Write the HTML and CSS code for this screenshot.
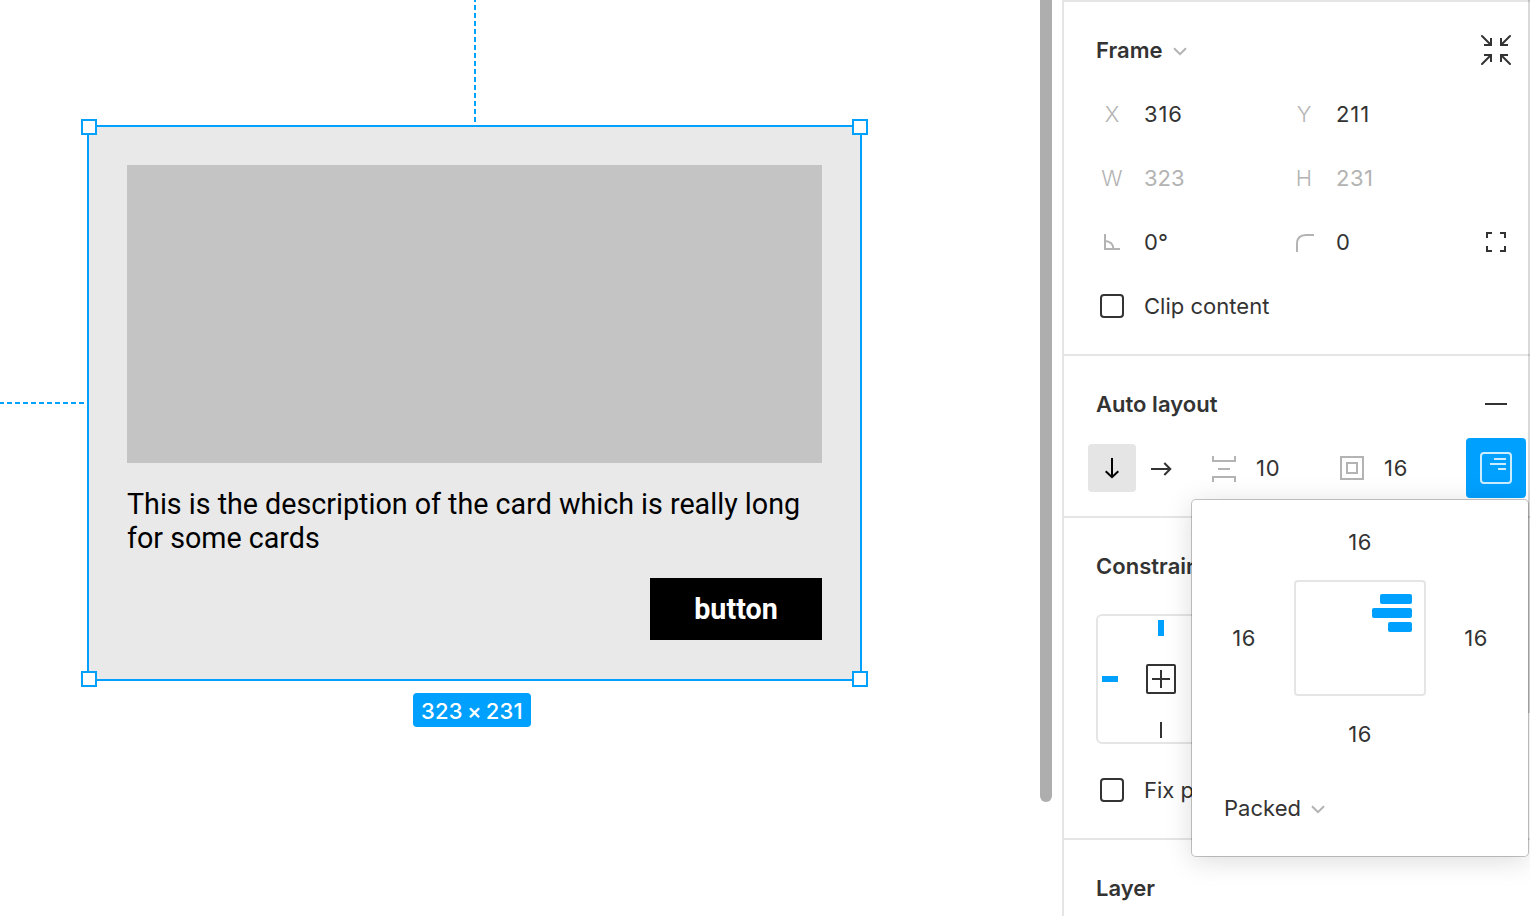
FILE: index.html
```html
<!DOCTYPE html>
<html lang="en">
<head>
<meta charset="utf-8">
<title>Auto layout</title>
<link rel="stylesheet" href="styles.css">
</head>
<body>
<div class="app">
  <main class="canvas">
    <div class="guide guide-v"></div>
    <div class="guide guide-h"></div>
    <div class="frame">
      <div class="picture"></div>
      <p class="desc">This is the description of the card which is really long<br>for some cards</p>
      <div class="btn">button</div>
      <i class="handle tl"></i><i class="handle tr"></i><i class="handle bl"></i><i class="handle br"></i>
    </div>
    <div class="size">323 × 231</div>
    <div class="scroll"></div>
  </main>
  <aside class="panel">
    <section class="section">
      <div class="row head">
        <h2>Frame</h2>
        <svg class="chev" width="14" height="9" viewBox="0 0 14 9"><path d="M1 1.2l6 6 6-6"/></svg>
        <svg class="end ico" width="48" height="48" viewBox="0 0 48 48"><path stroke-linecap="round" d="M10 10l8.500 8.500M38 10l-8.500 8.500M10 38l8.500-8.500M38 38l-8.500-8.500"/><path d="M19 12v7h-7M29 12v7h7M19 36v-7h-7M29 36v-7h7"/></svg>
      </div>
      <div class="row props"><span class="key">X</span><span class="val num">316</span><span class="key">Y</span><span class="val num">211</span></div>
      <div class="row props off"><span class="key">W</span><span class="val">323</span><span class="key">H</span><span class="val num-s">231</span></div>
      <div class="row props">
        <svg class="ico soft" width="48" height="48" viewBox="0 0 48 48"><path d="M17 16v15h15M17 23c5 0 8.500 3.500 8.500 8"/></svg>
        <span class="val">0°</span>
        <svg class="ico soft" width="48" height="48" viewBox="0 0 48 48"><path d="M17 34v-8c0-6 3-9 9-9h8"/></svg>
        <span class="val">0</span>
        <svg class="ico" width="48" height="48" viewBox="0 0 48 48"><path d="M15 20v-5h5M28 15h5v5M33 28v5h-5M20 33h-5v-5"/></svg>
      </div>
      <div class="row props check"><i class="box"></i><span class="val">Clip content</span></div>
    </section>
    <section class="section">
      <div class="row head"><h2>Auto layout</h2><svg class="end ico" width="48" height="48" viewBox="0 0 48 48"><path d="M13 24h22"/></svg></div>
      <div class="row auto">
        <span class="dir"><svg class="ico dark" width="48" height="48" viewBox="0 0 48 48"><path d="M24 14v19M17.700 27.200l6.300 6 6.300-6"/></svg></span>
        <svg class="ico" width="50" height="48" viewBox="0 0 50 48"><path d="M15 25h19M28.300 19l6 6-6 6"/></svg>
        <svg class="ico soft" width="48" height="48" viewBox="0 0 48 48"><path d="M13 12v5h22v-5M13 38v-5h22v5M18 25h12"/></svg>
        <span class="val num">10</span>
        <svg class="ico soft" width="48" height="48" viewBox="0 0 48 48"><path d="M13 13h22v22H13zM19 19h10v10H19z"/></svg>
        <span class="val num">16</span>
        <span class="align"><svg class="ico light" width="60" height="60" viewBox="0 0 60 60"><rect x="15" y="15" width="30" height="30" rx="3"/><path d="M28 21h12M24 26h16M32 31h8"/></svg></span>
      </div>
    </section>
    <section class="section">
      <div class="row head"><h2 class="covered-title">Constraints</h2></div>
      <div class="constraint">
        <svg class="ico" width="126" height="126" viewBox="0 0 126 126"><path class="blue" d="M63 4v16M4 63h16"/><rect x="49" y="49" width="28" height="28" rx="1"/><path d="M63 54v18M54 63h18M63 106v16M106 63h16"/></svg>
      </div>
      <div class="row props check"><i class="box"></i><span class="val covered">Fix position</span></div>
    </section>
    <section class="section">
      <div class="row head"><h2>Layer</h2></div>
    </section>
    <div class="edge"></div>
    <div class="popover">
      <div class="pads">
        <span class="top">16</span>
        <span class="left">16</span>
        <div class="stack"><i class="bar b1"></i><i class="bar b2"></i><i class="bar b3"></i></div>
        <span class="right">16</span>
        <span class="bottom">16</span>
      </div>
      <div class="mode">Packed<svg class="chev" width="14" height="9" viewBox="0 0 14 9"><path d="M1 1.200l6 6 6-6"/></svg></div>
    </div>
  </aside>
</div>
</body>
</html>
```
FILE: styles.css
```css
* { box-sizing: border-box; }
body {
  margin: 0;
  overflow: hidden;
  background: #fff;
  color: #333;
  font: 22px/32px Inter, "Liberation Sans", sans-serif;
  letter-spacing: 0.02px;
}
svg { display: block; flex: none; }
.app {
  display: flex;
  width: 1530px;
  height: 916px;
  overflow: hidden;
}

/* Canvas */
.canvas { position: relative; flex: 1; }
.guide { position: absolute; }
.guide-v {
  left: 474px; top: 0; width: 2px; height: 122px;
  background: repeating-linear-gradient(to bottom, #00a0ff 0 5px, transparent 5px 8px) 0 -3px / 2px 128px;
}
.guide-h {
  left: 0; top: 402px; width: 84px; height: 2px;
  background: repeating-linear-gradient(to right, #00a0ff 0 5px, transparent 5px 8px) -1px 0 / 88px 2px;
}
.frame {
  position: absolute;
  left: 87px; top: 125px;
  width: 775px; height: 556px;
  padding: 38px;
  border: 2px solid #00a0ff;
  background: #e9e9e9;
  display: flex;
  flex-direction: column;
}
.picture { height: 298.400px; background: #c4c4c4; }
.desc {
  margin: 24px 0 23px;
  color: #000;
  font: 28.700px/34px Roboto, sans-serif;
  letter-spacing: -0.010px;
  white-space: nowrap;
}
.btn {
  align-self: flex-end;
  width: 172px; height: 62px;
  background: #000;
  color: #fff;
  font: bold 28.700px/62px Roboto, sans-serif;
  letter-spacing: 0;
  text-align: center;
}
.handle {
  position: absolute;
  width: 16px; height: 16px;
  border: 2px solid #00a0ff;
  background: #fff;
}
.tl { left: -8px; top: -8px; }
.tr { right: -8px; top: -8px; }
.bl { left: -8px; bottom: -8px; }
.br { right: -8px; bottom: -8px; }
.size {
  position: absolute;
  left: 413px; top: 693px;
  width: 118px; height: 34px;
  border-radius: 4px;
  background: #00a0ff;
  color: #fff;
  font-weight: 500;
  line-height: 36px;
  letter-spacing: 0.200px;
  word-spacing: -2px;
  text-align: center;
  white-space: nowrap;
}
.scroll {
  position: absolute;
  left: 1040px; top: -10px;
  width: 12px; height: 812px;
  border-radius: 6px;
  background: #aeaeae;
}

/* Properties panel */
.panel {
  position: relative;
  flex: none;
  width: 468px;
  border-left: 2px solid #e5e5e5;
  background: #fff;
}
.section { padding: 16px 0 16px 24px; border-top: 2px solid #e5e5e5; }
.row { height: 64px; display: flex; align-items: center; }
.head { padding-left: 8px; padding-right: 10px; }
h2 { margin: 0; font-size: 22px; font-weight: 600; letter-spacing: 0.030px; }
.end { margin-left: auto; }
.chev { fill: none; stroke: #b3b3b3; stroke-width: 2; margin: 2px 0 0 10.500px; }
.ico { fill: none; stroke: #333; stroke-width: 2; }
.soft { stroke: #b3b3b3; }
.dark { stroke: #000; }
.light { stroke: #fff; stroke-opacity: 0.8; }
.props { display: grid; grid-template-columns: 48px 144px 48px 144px 48px; }
.key { color: #b3b3b3; font-weight: 350; text-align: center; }
.val { padding-left: 8px; white-space: nowrap; }
.num { letter-spacing: 0.900px; }
.num-s { letter-spacing: 0.500px; }
.off .val { color: #b3b3b3; }
.covered { width: 56px; overflow: hidden; }
.covered-title { width: 96px; overflow: hidden; }
.box {
  width: 24px; height: 24px;
  margin-left: 12px;
  border: 2px solid #333;
  border-radius: 4px;
}
.auto { display: grid; grid-template-columns: 48px 64px 48px 80px 48px 90px 60px; }
.dir { border-radius: 4px; background: #e5e5e5; }
.align { border-radius: 4px; background: #00a0ff; }
.constraint {
  width: 130px; height: 130px;
  margin: 16px 0 14px 8px;
  border: 2px solid #e5e5e5;
  border-radius: 6px;
}
.blue { stroke: #00a0ff; stroke-width: 6; }
.edge {
  position: absolute;
  right: 0; top: 0;
  width: 2px; height: 713px;
  background: rgba(0, 0, 0, 0.150);
}

/* Alignment and padding popover */
.popover {
  position: absolute;
  left: 128px; top: 500px;
  width: 336px; height: 356px;
  padding-top: 4px;
  border-radius: 4px;
  background: #fff;
  box-shadow: 0 0 0 1px rgba(0, 0, 0, 0.220), 0 4px 28px rgba(0, 0, 0, 0.150);
}
.pads {
  display: grid;
  grid-template: 76px 116px 76px / 102px 132px 102px;
  align-items: center;
  text-align: center;
  letter-spacing: 0.500px;
}
.top, .bottom { grid-column: 2; }
.left { grid-column: 1; padding-left: 2px; }
.right { padding-right: 2px; }
.stack {
  height: 116px;
  padding: 12px;
  border: 2px solid #e5e5e5;
  border-radius: 4px;
  display: flex;
  flex-direction: column;
  align-items: flex-end;
  gap: 4px;
}
.bar { height: 10px; border-radius: 2px; background: #00a0ff; }
.b1 { width: 32px; }
.b2 { width: 40px; }
.b3 { width: 24px; }
.mode { display: flex; align-items: center; height: 48px; margin: 12px 0 0 32px; }
```
